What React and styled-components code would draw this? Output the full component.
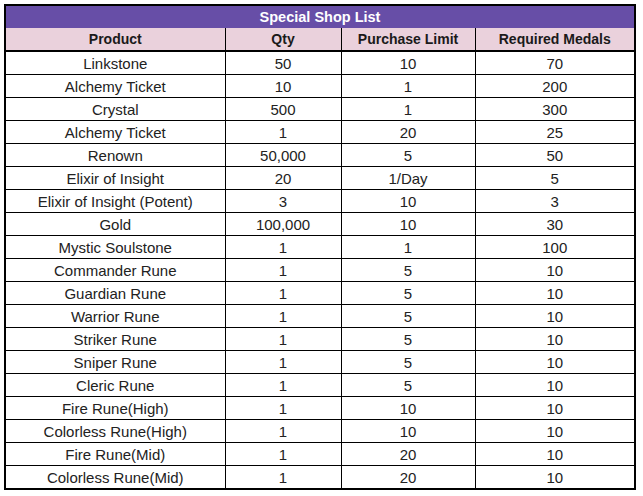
import React from "react";
import styled, { createGlobalStyle } from "styled-components";

const GlobalStyle = createGlobalStyle`
  body {
    margin: 0;
    background: #fff;
    font-family: "Liberation Sans", Arial, sans-serif;
  }
`;

const Page = styled.div`
  padding: 4px 0 0 4px;
`;

const Table = styled.table`
  width: 632px;
  border-collapse: collapse;
  border: 2px solid #000;
  font-size: 15px;
  line-height: 17px;
  color: #222;
  table-layout: fixed;
`;

const Col = styled.col`
  width: ${(p) => p.$w}px;
`;

const TitleCell = styled.th`
  background: #674ea7;
  color: #fff;
  font-size: 14.5px;
  font-weight: bold;
  height: 22px;
  padding: 0;
  text-align: center;
`;

const HeadCell = styled.th`
  background: #ead1dc;
  color: #1a1a1a;
  font-size: 14px;
  font-weight: bold;
  height: 22px;
  padding: 0;
  border-left: 1px solid #000;
  border-bottom: 2px solid #000;
  text-align: center;
`;

const Cell = styled.td`
  height: 22px;
  padding: 0;
  border: 1px solid #000;
  text-align: center;
  white-space: nowrap;
`;

const rows = [
  ["Linkstone", "50", "10", "70"],
  ["Alchemy Ticket", "10", "1", "200"],
  ["Crystal", "500", "1", "300"],
  ["Alchemy Ticket", "1", "20", "25"],
  ["Renown", "50,000", "5", "50"],
  ["Elixir of Insight", "20", "1/Day", "5"],
  ["Elixir of Insight (Potent)", "3", "10", "3"],
  ["Gold", "100,000", "10", "30"],
  ["Mystic Soulstone", "1", "1", "100"],
  ["Commander Rune", "1", "5", "10"],
  ["Guardian Rune", "1", "5", "10"],
  ["Warrior Rune", "1", "5", "10"],
  ["Striker Rune", "1", "5", "10"],
  ["Sniper Rune", "1", "5", "10"],
  ["Cleric Rune", "1", "5", "10"],
  ["Fire Rune(High)", "1", "10", "10"],
  ["Colorless Rune(High)", "1", "10", "10"],
  ["Fire Rune(Mid)", "1", "20", "10"],
  ["Colorless Rune(Mid)", "1", "20", "10"],
];

const columns = [
  { name: "Product", w: 220 },
  { name: "Qty", w: 116 },
  { name: "Purchase Limit", w: 134 },
  { name: "Required Medals", w: 160 },
];

export default function App() {
  return (
    <Page>
      <GlobalStyle />
      <Table>
        <colgroup>
          {columns.map((c) => (
            <Col key={c.name} $w={c.w} />
          ))}
        </colgroup>
        <thead>
          <tr>
            <TitleCell colSpan={4}>Special Shop List</TitleCell>
          </tr>
          <tr>
            {columns.map((c) => (
              <HeadCell key={c.name}>{c.name}</HeadCell>
            ))}
          </tr>
        </thead>
        <tbody>
          {rows.map((r, i) => (
            <tr key={i}>
              {r.map((v, j) => (
                <Cell key={j}>{v}</Cell>
              ))}
            </tr>
          ))}
        </tbody>
      </Table>
    </Page>
  );
}
